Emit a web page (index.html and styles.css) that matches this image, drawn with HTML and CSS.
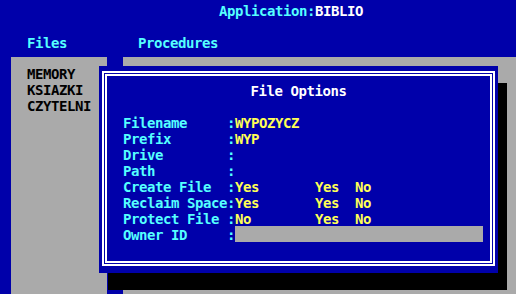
FILE: index.html
```html
<!DOCTYPE html>
<html>
<head>
<meta charset="utf-8">
<link rel="stylesheet" href="styles.css">
</head>
<body>
<div class="screen">
  <div class="title"><span class="cyan">Application:</span><span class="white">BIBLIO</span></div>
  <div class="menu"><span class="m-files">Files</span><span class="m-proc">Procedures</span></div>
  <div class="workspace">
    <div class="panel panel-left">
      <div>MEMORY</div>
      <div>KSIAZKI</div>
      <div>CZYTELNI</div>
    </div>
    <div class="panel panel-right"></div>
    <div class="dialog">
      <div class="frame">
        <div class="frame-inner">
          <div class="dlg-title">File Options</div>
          <div class="fields">
            <div class="row"><span class="cyan">Filename     :</span><span class="yellow">WYPOZYCZ</span></div>
            <div class="row"><span class="cyan">Prefix       :</span><span class="yellow">WYP</span></div>
            <div class="row"><span class="cyan">Drive        :</span></div>
            <div class="row"><span class="cyan">Path         :</span></div>
            <div class="row"><span class="cyan">Create File  :</span><span class="yellow">Yes       Yes  No</span></div>
            <div class="row"><span class="cyan">Reclaim Space:</span><span class="yellow">Yes       Yes  No</span></div>
            <div class="row"><span class="cyan">Protect File :</span><span class="yellow">No        Yes  No</span></div>
            <div class="row"><span class="cyan">Owner ID     :</span><span class="field"></span></div>
          </div>
        </div>
      </div>
    </div>
  </div>
</div>
</body>
</html>
```
FILE: styles.css
```css
html, body {
  margin: 0;
  padding: 0;
  background: #0000aa;
}
.screen {
  width: 516px;
  height: 294px;
  overflow: hidden;
  background: #0000aa;
  font-family: "DejaVu Sans Mono", "Liberation Mono", monospace;
  font-weight: bold;
  font-size: 14px;
  letter-spacing: -0.43px;
  line-height: 16px;
}
.cyan { color: #55ffff; }
.white { color: #ffffff; }
.yellow { color: #ffff55; }
.title {
  padding: 3px 0 0 219px;
  height: 15px;
}
.menu {
  margin-top: 17px;
  height: 15px;
  display: flex;
  color: #55ffff;
}
.m-files { margin-left: 27px; }
.m-proc { margin-left: 71px; }
.workspace {
  position: relative;
  margin-top: 7px;
  height: 237px;
  padding-left: 11px;
  display: grid;
  grid-template-columns: 96px 393px;
  column-gap: 16px;
}
.panel {
  background: #aaaaaa;
  color: #000000;
}
.panel-left {
  padding: 9px 0 0 16px;
}
.dialog {
  position: absolute;
  left: 99px;
  top: 9px;
  width: 399px;
  height: 207px;
  background: #0000aa;
  box-shadow: 9px 17px 0 0 #000000;
  display: flex;
  flex-direction: column;
}
.frame {
  flex: 1;
  margin: 5px 3px 7px 3px;
  border: 2px solid #ffffff;
  padding: 1px;
  display: flex;
}
.frame-inner {
  flex: 1;
  border: 2px solid #ffffff;
  padding: 7px 0 0 16px;
}
.dlg-title {
  color: #ffffff;
  text-align: center;
  margin-left: -16px;
}
.fields {
  margin-top: 16px;
}
.row {
  height: 16px;
  white-space: pre;
}
.field {
  display: inline-block;
  vertical-align: top;
  width: 248px;
  height: 16px;
  margin-top: -1px;
  background: #aaaaaa;
}
```
